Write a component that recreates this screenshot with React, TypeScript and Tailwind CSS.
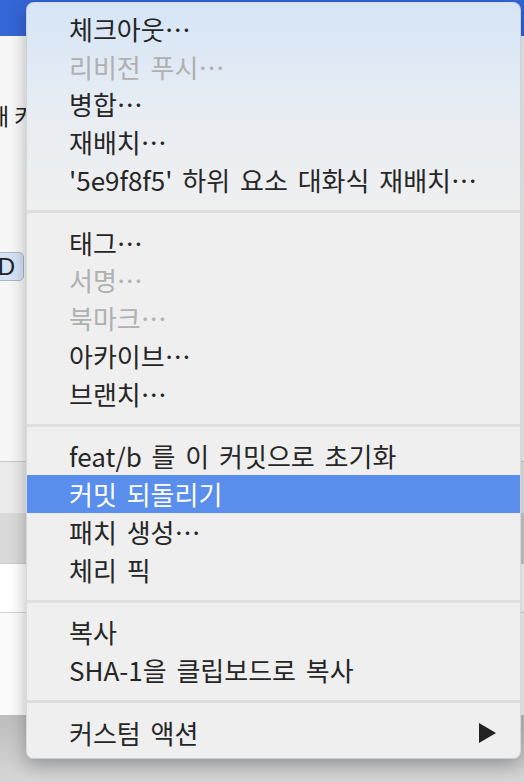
import React from "react";

type Item = { label: string; disabled?: boolean; active?: boolean; submenu?: boolean };

const groups: Item[][] = [
  [
    { label: "체크아웃…" },
    { label: "리비전 푸시…", disabled: true },
    { label: "병합…" },
    { label: "재배치…" },
    { label: "'5e9f8f5' 하위 요소 대화식 재배치…" },
  ],
  [
    { label: "태그…" },
    { label: "서명…", disabled: true },
    { label: "북마크…", disabled: true },
    { label: "아카이브…" },
    { label: "브랜치…" },
  ],
  [
    { label: "feat/b 를 이 커밋으로 초기화" },
    { label: "커밋 되돌리기", active: true },
    { label: "패치 생성…" },
    { label: "체리 픽" },
  ],
  [{ label: "복사" }, { label: "SHA-1을 클립보드로 복사" }],
  [{ label: "커스텀 액션", submenu: true }],
];

const font = { fontFamily: '"Noto Sans CJK KR", "Liberation Sans", sans-serif' };

function MenuRow({ item }: { item: Item }) {
  const color = item.active
    ? "bg-[#5a8eec] text-white"
    : item.disabled
    ? "text-[#b0b0b0]"
    : "text-[#262626]";
  return (
    <div className={`h-[37.75px] flex items-center justify-between pl-[42px] pr-[24px] text-[26px] leading-none [word-spacing:4px] ${color}`}>
      <span className="whitespace-nowrap">{item.label}</span>
      {item.submenu && (
        <svg width="17" height="20" viewBox="0 0 17 20">
          <path d="M0 0 L17 10 L0 20 Z" fill="#222" />
        </svg>
      )}
    </div>
  );
}

export default function App() {
  return (
    <div className="relative w-[524px] h-[782px] overflow-hidden bg-[#cbcbcb]" style={font}>
      {/* window behind */}
      <div className="flex flex-col h-full">
        <div className="h-[36px] bg-[#3466d6]" />
        <div className="h-[425px] bg-[#f7f7f7] flex flex-col pt-[66px]">
          <div className="text-[23px] leading-[26px] text-[#222] whitespace-nowrap ml-[-12px]">새 커밋</div>
          <div className="mt-[124px] ml-[-40px] w-[64px] h-[29px] rounded-[5px] border border-[#a9b7ca] bg-[#d5e2f5] flex items-center justify-end pr-[8px] text-[24px] text-[#222]" style={{ fontFamily: '"Liberation Sans", sans-serif' }}>
            D
          </div>
        </div>
        <div className="h-px bg-[#c9c9c9]" />
        <div className="h-[51px] bg-[#ebebeb]" />
        <div className="h-[50px] bg-[linear-gradient(to_right,#dadada,#cdcdcd)]" />
        <div className="h-px bg-[#cccccc]" />
        <div className="h-[48px] bg-white" />
        <div className="h-px bg-[#d6d6d6]" />
        <div className="h-[102px] bg-[#fbfbfb]" />
        <div className="flex-1 bg-[linear-gradient(to_bottom,#bdbdbd,#d6d6d6)]" />
      </div>

      {/* context menu */}
      <div className="absolute left-[26px] top-[2px] w-[495px] h-[757px] rounded-[8px] border border-[#00000018] shadow-[0_6px_18px_rgba(0,0,0,0.28)] overflow-hidden bg-[linear-gradient(180deg,#d6e5f7_0px,#e8edf3_110px,#efefef_210px,#efefef_100%)] pt-[7px]">
        {groups.map((g, gi) => (
          <div key={gi}>
            {gi > 0 && (
              <div className="h-[25px] flex items-center">
                <div className="h-[3px] w-full bg-[#dedede]" />
              </div>
            )}
            {g.map((item) => (
              <MenuRow key={item.label} item={item} />
            ))}
          </div>
        ))}
      </div>
    </div>
  );
}
